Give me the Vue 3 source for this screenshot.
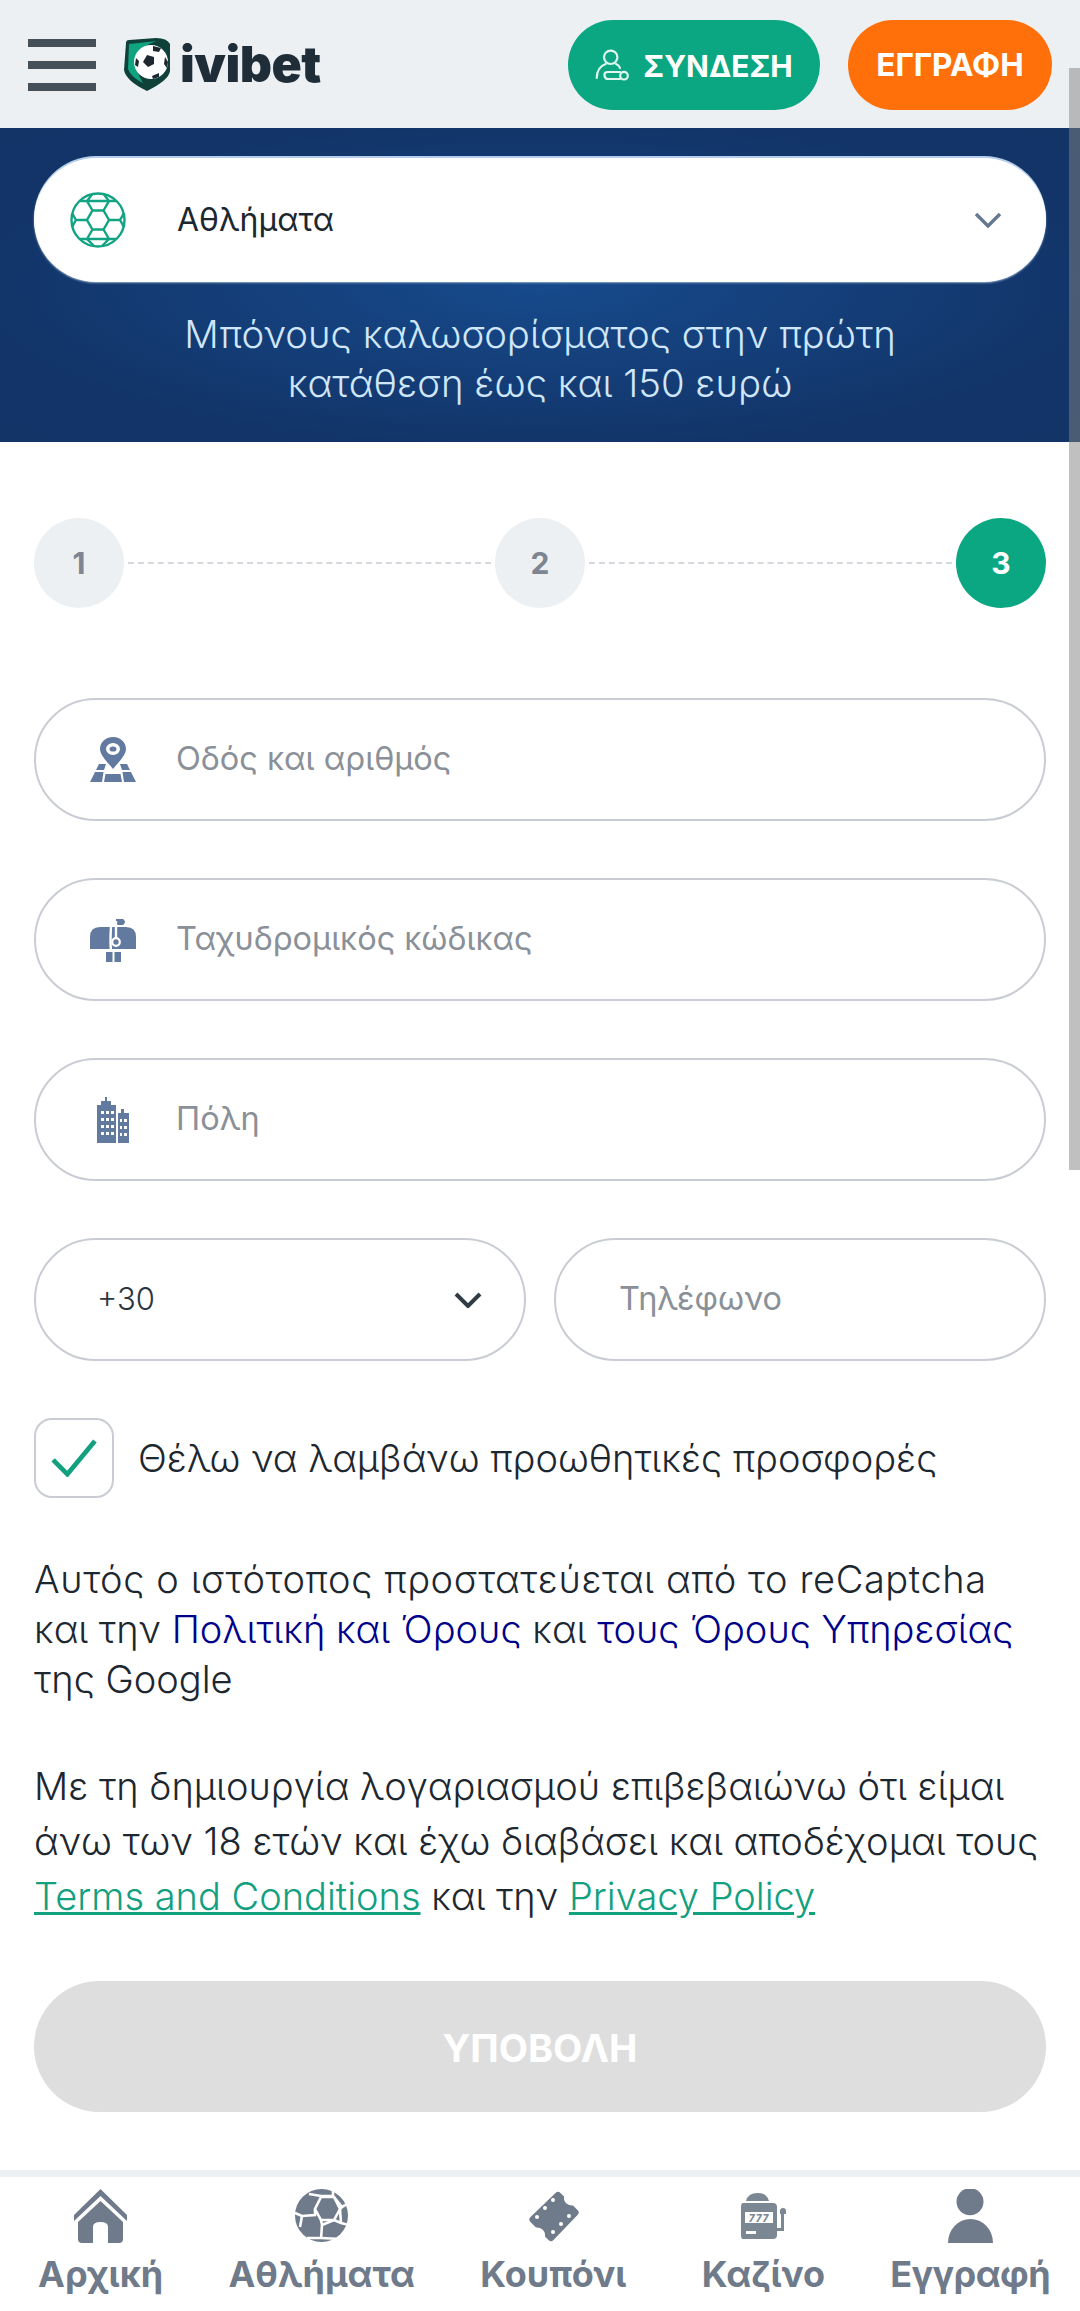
<template>
  <div class="page">
    <header class="topbar">
      <div class="burger"><i></i><i></i><i></i></div>
      <div class="logo">
        <svg class="shield" viewBox="0 0 48 54">
          <path d="M3 6 Q3 3 6 3 L33 1 Q44 1 47 7 L47 34 Q46 43 24 54 Q3 44 1 33 Z" fill="#10403a" />
          <path d="M6 7 L34 4 Q18 8 14 22 Q12 34 20 46 Q8 40 5 32 Z" fill="#10a37f" />
          <circle cx="28" cy="25" r="17" fill="#fff" />
          <path d="M24 18 L31 20 L31 27 L25 30 L20 25 Z" fill="#1d2730" />
          <path d="M30 9 L38 11 L36 15 L30 14 Z M42 20 L45 25 L44 31 L41 27 Z M13 21 L16 24 L15 30 L12 28 Z M29 39 L36 36 L36 40 L30 42 Z" fill="#1d2730" />
        </svg>
        <span class="logo-text">ivibet</span>
      </div>
      <div class="top-actions">
        <button class="btn-login">
          <svg class="key-user" viewBox="0 0 34 32" fill="none" stroke="#dff7ef" stroke-width="2.200" stroke-linecap="round">
            <circle cx="15.700" cy="8.300" r="6.700" />
            <path d="M1.700 29 Q2 18 10.700 15 M21 15 Q24 16 25 19" />
            <path d="M25 23 H13 Q9 23 9.500 26.500 Q10 30 13 30 H25" />
            <circle cx="29" cy="26.700" r="3.800" />
          </svg>
          <span class="login-label">ΣΥΝΔΕΣΗ</span>
        </button>
        <button class="btn-register">ΕΓΓΡΑΦΗ</button>
      </div>
    </header>

    <section class="hero">
      <div class="sport-select">
        <svg class="sport-ball" viewBox="0 0 56 56" fill="none" stroke="#12a383" stroke-width="2.400">
          <circle cx="28" cy="28" r="26.500" />
          <path d="M22.500 18.500 H33.500 L39 28 L33.500 37.500 H22.500 L17 28 Z" />
          <path d="M22.500 18.500 L17 9 L22 2.500 M33.500 18.500 L39 9 L34 2.500 M17 9 H39 M17 9 H10 M39 9 H46" />
          <path d="M17 28 H6 L2 21 M6 28 L2 35 M39 28 H50 L54 21 M50 28 L54 35" />
          <path d="M22.500 37.500 L17 47 L24 54 M33.500 37.500 L39 47 L32 54 M17 47 H39 M17 47 H10 M39 47 H46" />
        </svg>
        <span class="sport-name">Αθλήματα</span>
        <svg class="sport-chevron" viewBox="0 0 28 16" fill="none" stroke="#66788f" stroke-width="3.400">
          <path d="M2 2 L14 14 L26 2" />
        </svg>
      </div>
      <p class="bonus">Μπόνους καλωσορίσματος στην πρώτη<br />κατάθεση έως και 150 ευρώ</p>
    </section>

    <main class="content">
      <div class="steps">
        <span class="step">1</span>
        <span class="step-line"></span>
        <span class="step">2</span>
        <span class="step-line"></span>
        <span class="step step-active">3</span>
      </div>

      <div class="field">
        <svg class="field-icon" viewBox="0 0 46 46" fill="#627aa0">
          <path fill-rule="evenodd" d="M23 0 C15 0 10 6 10 12 C10 18 18 26 23 32 C28 26 36 18 36 12 C36 6 31 0 23 0 Z M23 6 A7 6 0 1 0 23 18 A7 6 0 1 0 23 6 Z" />
          <ellipse cx="23" cy="12" rx="3.500" ry="2.600" />
          <path d="M9 27 L16 27 L14 33 L6 33 Z M30 27 L37 27 L40 33 L32 33 Z M5 35 L13.500 35 L12 45 L0 45 Z M15.500 37 L30.500 37 L32 45 L14 45 Z M32.500 35 L41 35 L46 45 L34 45 Z" />
        </svg>
        <span class="placeholder">Οδός και αριθμός</span>
      </div>

      <div class="field">
        <svg class="field-icon" viewBox="0 0 46 46" fill="#627aa0">
          <path d="M0 32 V20 Q0 10 10 10 H36 Q46 10 46 20 V32 Z" />
          <path d="M26 2 H33 Q37 5 33 8 H26 Z" />
          <path d="M21 9 Q20 26 21 33" fill="none" stroke="#fff" stroke-width="2.400" />
          <path d="M26 4 V21" fill="none" stroke="#fff" stroke-width="2.400" />
          <circle cx="26" cy="25" r="3.800" stroke="#fff" stroke-width="2.200" />
          <rect x="16" y="35" width="6.500" height="10" />
          <rect x="24.500" y="35" width="6.500" height="10" />
        </svg>
        <span class="placeholder">Ταχυδρομικός κώδικας</span>
      </div>

      <div class="field">
        <svg class="field-icon city" viewBox="0 0 32 46" fill="#627aa0">
          <path fill-rule="evenodd" d="M0 8 H4 V4 H8 V0 H10 V4 H14 V8 H19 V46 H0 Z M4 14 h3 v3 h-3 Z M9 14 h3 v3 h-3 Z M14 14 h3 v3 h-3 Z M4 21 h3 v3 h-3 Z M9 21 h3 v3 h-3 Z M14 21 h3 v3 h-3 Z M4 28 h3 v3 h-3 Z M9 28 h3 v3 h-3 Z M14 28 h3 v3 h-3 Z M4 35 h3 v3 h-3 Z M9 35 h3 v3 h-3 Z M14 35 h3 v3 h-3 Z" />
          <path fill-rule="evenodd" d="M21 16 H24 V12 H27 V16 H32 V46 H21 Z M23 22 h2 v3 h-2 Z M27 22 h3 v3 h-3 Z M23 29 h2 v3 h-2 Z M27 29 h3 v3 h-3 Z M23 36 h2 v3 h-2 Z M27 36 h3 v3 h-3 Z" />
        </svg>
        <span class="placeholder">Πόλη</span>
      </div>

      <div class="phone-row">
        <div class="field field-code">
          <span class="code">+30</span>
          <svg class="code-chevron" viewBox="0 0 28 16" fill="none" stroke="#2f3b45" stroke-width="4">
            <path d="M2 2 L14 14 L26 2" />
          </svg>
        </div>
        <div class="field field-phone">
          <span class="placeholder">Τηλέφωνο</span>
        </div>
      </div>

      <div class="promo">
        <span class="checkbox">
          <svg viewBox="0 0 48 40" fill="none" stroke="#12a07f" stroke-width="5">
            <path d="M2 22 L17 37 L46 2" />
          </svg>
        </span>
        <span class="promo-text">Θέλω να λαμβάνω προωθητικές προσφορές</span>
      </div>

      <p class="legal recaptcha">
        <span class="wide-line">Αυτός ο ιστότοπος προστατεύεται από το reCaptcha</span><br />
        και την <a class="link-blue">Πολιτική και Όρους</a> και <a class="link-blue">τους Όρους Υπηρεσίας</a><br />
        της Google
      </p>
      <p class="legal terms">
        Με τη δημιουργία λογαριασμού επιβεβαιώνω ότι είμαι<br />
        άνω των 18 ετών και έχω διαβάσει και αποδέχομαι τους<br />
        <a class="link-green">Terms and Conditions</a> και την <a class="link-green">Privacy Policy</a>
      </p>

      <button class="submit">ΥΠΟΒΟΛΗ</button>
    </main>

    <nav class="bottom-nav">
      <div class="nav-item">
        <svg viewBox="0 0 53 54" fill="#6f7a8a">
          <path d="M26.500 0 L53 26 L53 32 L26.500 7 L0 32 L0 26 Z" />
          <path d="M26.500 12 L49 33 V50 Q49 54 45 54 H34 V38 Q34 33 26.500 33 Q19 33 19 38 V54 H8 Q4 54 4 50 V33 Z" />
        </svg>
        <span>Αρχική</span>
      </div>
      <div class="nav-item">
        <svg viewBox="0 0 53 54">
          <circle cx="26.500" cy="26.500" r="26.500" fill="#6f7a8a" />
          <g fill="none" stroke="#fff" stroke-width="2.600">
            <path d="M26 8 H39 L45 20 L39 31 H26 L20 20 Z" />
            <path d="M14 5 L26 7 H38 L38 0 M39 8 L47 18 L54 14 M45 20 L47 18 M39 31 L46 34 L54 36 M45 20 L46 34" />
            <path d="M26 31 L27 36 L26 50 M39 31 L27 36 M20 20 L20 26 L7 27 L0 24 M7 27 L5 38" />
            <path d="M26 49 L12 49 M26 49 L46 50" />
          </g>
        </svg>
        <span>Αθλήματα</span>
      </div>
      <div class="nav-item nav-coupon">
        <svg viewBox="0 0 53 54">
          <path d="M28.500 4 Q31 1.500 33.500 4 L37 7.500 Q36.500 12 39.500 14.500 Q42.500 17 46 16.500 L50.500 21 Q53 23.500 50.500 26 L26.500 51 Q24 53.500 21.500 51 L18 47.500 Q18.500 43 15.500 40.500 Q12.500 38 9 38.500 L3.500 33 Q1 30.500 3.500 28 Z" fill="#6f7a8a" />
          <g fill="#fff">
            <circle cx="26" cy="11" r="2" />
            <circle cx="18" cy="19" r="2" />
            <circle cx="10" cy="28" r="2" />
            <circle cx="42" cy="27" r="2" />
            <circle cx="34" cy="35" r="2" />
            <circle cx="26" cy="43" r="2" />
          </g>
        </svg>
        <span>Κουπόνι</span>
      </div>
      <div class="nav-item">
        <svg viewBox="0 0 47 54" fill="#7b8792">
          <path d="M6 12 Q8 4 17.500 4 Q27 4 29 12 Z" />
          <path fill-rule="evenodd" d="M3 14 H33 Q37 14 37 18 V46 Q37 50 33 50 H3 Q1 50 1 46 V18 Q1 14 3 14 Z M5 23 V34 H33 V23 Z M6 42 V45 H16 V42 Z" />
          <path d="M37 39 H41 V25 H40 V22 A3 3 0 0 1 46 22 V25 H44 V42 H37 Z" />
          <text class="sevens" x="19" y="32.500" text-anchor="middle">777</text>
        </svg>
        <span>Καζίνο</span>
      </div>
      <div class="nav-item nav-last">
        <svg viewBox="0 0 47 54" fill="#6f7a8a">
          <circle cx="23" cy="12.700" r="13.500" />
          <path d="M1 54 A22.500 24 0 0 1 46 54 Z" />
        </svg>
        <span>Εγγραφή</span>
      </div>
    </nav>

    <div class="scrollbar"></div>
  </div>
</template>

<script setup>
</script>

<style>
html, body { margin: 0; background: #fff; }
</style>

<style scoped>
.page {
  position: relative;
  width: 1080px;
  height: 2311px;
  overflow: hidden;
  display: flex;
  flex-direction: column;
  background: #fff;
  color: #1d2730;
  font-family: Inter, "Noto Sans", sans-serif;
}

.topbar {
  height: 128px;
  box-sizing: border-box;
  display: flex;
  align-items: center;
  background: #edf0f3;
  padding: 0 28px;
}
.burger {
  width: 68px;
  display: flex;
  flex-direction: column;
  gap: 14px;
  margin-top: 1px;
}
.burger i {
  display: block;
  height: 8px;
  background: #454f58;
}
.logo {
  display: flex;
  align-items: center;
  margin-left: 27px;
  gap: 9px;
}
.shield { width: 48px; height: 54px; }
.logo-text {
  font-size: 50px;
  font-weight: 900;
  letter-spacing: -0.5px;
  color: #1e2d38;
  line-height: 54px;
}
.top-actions {
  margin-left: auto;
  display: flex;
  gap: 28px;
}
.top-actions button {
  height: 90px;
  margin-top: 1px;
  border: 0;
  border-radius: 45px;
  color: #fff;
  font-family: inherit;
  font-weight: 700;
  display: flex;
  align-items: center;
  justify-content: center;
  padding: 0;
}
.btn-login { width: 252px; background: #0ba782; gap: 14px; font-size: 30px; }
.login-label { padding-top: 2px; }
.btn-register { width: 204px; background: #ff6f0a; font-size: 31.500px; }
.key-user { width: 34px; height: 32px; }

.hero {
  height: 314px;
  box-sizing: border-box;
  padding: 30px 34px 0;
  background: radial-gradient(ellipse at center, #174a8c 0%, #123468 75%, #123467 100%);
}
.sport-select {
  height: 124px;
  box-sizing: border-box;
  border-radius: 62px;
  background: #fff;
  box-shadow: 0 -2px 0 #b4cdea, 0 1px 2px #8fa8c8;
  display: flex;
  align-items: center;
  padding: 0 44px 0 36px;
}
.sport-ball { width: 56px; height: 56px; }
.sport-name {
  margin-left: 51px;
  padding-bottom: 2px;
  font-size: 32px;
  font-weight: 400;
  color: #1d2730;
}
.sport-chevron { width: 28px; height: 16px; margin-left: auto; }
.bonus {
  margin: 28px 0 0;
  text-align: center;
  font-size: 38.300px;
  font-weight: 300;
  line-height: 49px;
  color: #cfe6fb;
}

.content {
  flex: 1;
  padding: 76px 34px 0;
}
.steps {
  display: flex;
  align-items: center;
}
.step {
  flex: none;
  width: 90px;
  height: 90px;
  border-radius: 50%;
  background: #edf0f3;
  color: #7c8590;
  font-size: 30px;
  font-weight: 700;
  display: flex;
  align-items: center;
  justify-content: center;
}
.step-active { background: #0ba782; color: #fff; }
.step-line {
  flex: 1;
  margin: 0 4px;
  border-top: 2px dashed #d5d8dc;
}

.field {
  height: 123px;
  box-sizing: border-box;
  margin-top: 57px;
  border: 2px solid #c9cdd3;
  border-radius: 62px;
  display: flex;
  align-items: center;
  padding-left: 54px;
}
.steps + .field { margin-top: 90px; }
.field-icon { width: 46px; height: 46px; flex: none; }
.field-icon.city { width: 32px; margin: 0 7px; }
.placeholder {
  margin-left: 40px;
  padding-bottom: 2px;
  font-size: 32.500px;
  font-weight: 400;
  color: #8a9098;
}
.phone-row {
  display: grid;
  grid-template-columns: 1fr 1fr;
  column-gap: 28px;
}
.field-code { padding: 0 42px 0 61px; }
.field-phone { padding-left: 63px; }
.field-phone .placeholder { margin-left: 0; }
.code { padding-bottom: 3px; font-size: 31px; font-weight: 300; color: #2b3640; }
.code-chevron { width: 28px; height: 16px; margin-left: auto; }

.promo {
  margin-top: 57px;
  display: flex;
  align-items: center;
  gap: 24px;
}
.checkbox {
  width: 80px;
  height: 80px;
  box-sizing: border-box;
  border: 2px solid #c9cdd3;
  border-radius: 18px;
  display: flex;
  align-items: center;
  justify-content: center;
}
.checkbox svg { width: 46px; height: 38px; }
.promo-text { font-size: 38px; font-weight: 300; color: #1d2730; }

.legal {
  margin: 0;
  font-size: 38px;
  font-weight: 300;
  color: #1d2730;
  white-space: nowrap;
}
.recaptcha { margin-top: 56px; line-height: 50px; }
.wide-line { letter-spacing: 0.6px; }
.terms { margin-top: 55px; line-height: 55px; }
.link-blue { color: #00008b; }
.link-green { color: #12a07f; text-decoration: underline; }

.submit {
  display: block;
  width: 100%;
  height: 131px;
  margin-top: 57px;
  padding: 2px 0 0;
  border: 0;
  border-radius: 66px;
  background: #dedede;
  color: #fff;
  font-family: inherit;
  font-size: 38px;
  font-weight: 700;
}

.bottom-nav {
  height: 141px;
  box-sizing: border-box;
  border-top: 7px solid #edf0f3;
  padding: 12px 30px 0 38px;
  display: flex;
  justify-content: space-between;
  background: #fff;
}
.nav-item {
  display: flex;
  flex-direction: column;
  align-items: center;
  color: #6f7a8a;
  font-size: 36px;
  font-weight: 700;
  line-height: 46px;
}
.nav-coupon { margin-right: 10px; }
.nav-last { letter-spacing: -0.6px; }
.nav-item svg { height: 54px; width: auto; margin-bottom: 8px; }
.sevens {
  font-size: 10px;
  font-weight: 800;
  font-style: italic;
  letter-spacing: 0.8px;
  fill: #7b8792;
}

.scrollbar {
  position: absolute;
  top: 68px;
  right: 0;
  width: 11px;
  height: 1102px;
  background: rgba(130, 130, 130, 0.5);
}
</style>
